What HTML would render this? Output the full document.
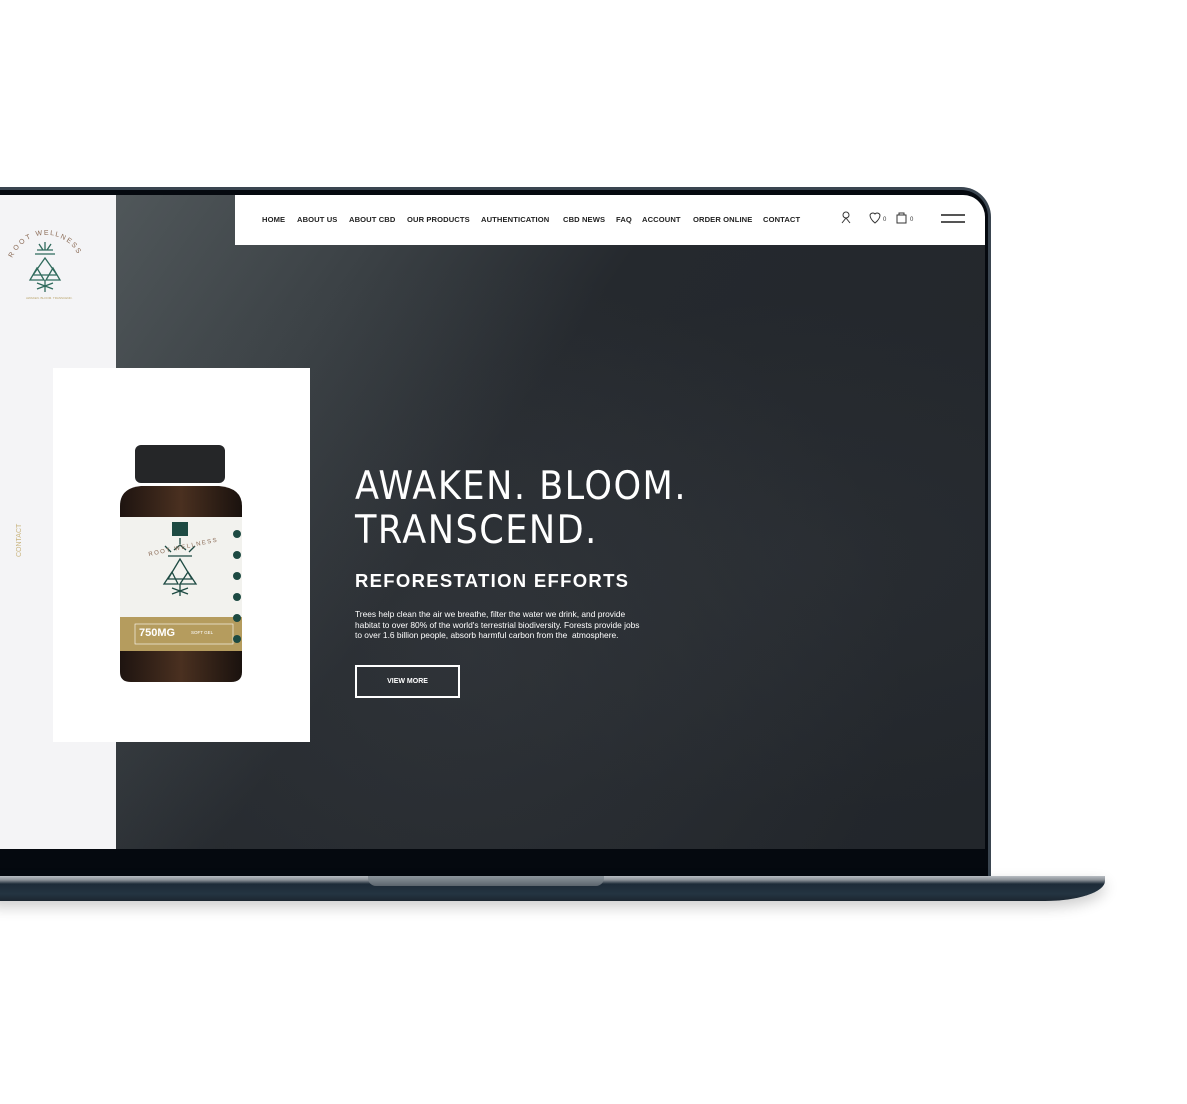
<!DOCTYPE html>
<html><head><style>
*{margin:0;padding:0;box-sizing:border-box}
body{width:1187px;height:1104px;background:#fff;position:relative;overflow:hidden;font-family:"Liberation Sans",sans-serif}
.lid{position:absolute;left:-20px;top:187px;width:1011px;height:690px;background:#3a4550;border-radius:0 30px 0 0}
.lidin{position:absolute;left:-20px;top:190px;width:1008px;height:686px;background:#05090f;border-radius:0 27px 0 0}
.screen{position:absolute;left:0;top:195px;width:985px;height:654px;overflow:hidden;border-radius:0 22px 0 0;background:#23272c}
.side{position:absolute;left:0;top:0;width:116px;height:654px;background:#f4f4f6}
.hero{position:absolute;left:116px;top:0;width:869px;height:654px;background:linear-gradient(125deg,#50575a 0%,#3b4145 22%,#25292e 42%,#22262b 100%)}
.mtn{position:absolute;left:116px;top:0;width:869px;height:654px;background:radial-gradient(ellipse at 40% 70%,rgba(90,95,100,.18),transparent 60%),radial-gradient(ellipse at 80% 55%,rgba(70,75,80,.15),transparent 50%)}
.nav{position:absolute;left:235px;top:0;width:750px;height:50px;background:#fff}
.nav span{position:absolute;top:20px;font-size:7.6px;font-weight:bold;color:#222;letter-spacing:.1px}
.card{position:absolute;left:53px;top:173px;width:257px;height:374px;background:#fff}
.base{position:absolute;left:-10px;top:876px;width:1115px;height:25px;background:linear-gradient(#b8bdc2 0,#8a9096 4px,#1d2b38 8px,#243441 18px,#1c2630 100%);border-radius:0 0 60px 0/0 0 20px 0;box-shadow:0 6px 14px rgba(0,0,0,.2)}
.notch{position:absolute;left:368px;top:876px;width:236px;height:10px;background:linear-gradient(#8e969d,#5c656d);border-radius:0 0 8px 8px}
</style></head><body>
<div class="lid"></div><div class="lidin"></div>
<div class="screen">
<div class="side">
<svg style="position:absolute;left:4px;top:35px" width="90" height="75" viewBox="0 0 90 75" font-family="Liberation Sans" font-size="7" fill="#8a6a55">
<text transform="translate(8,28) rotate(-60)">R</text>
<text transform="translate(12,21) rotate(-48)">O</text>
<text transform="translate(17,15) rotate(-36)">O</text>
<text transform="translate(23,10) rotate(-24)">T</text>
<text transform="translate(32,6) rotate(-10)">W</text>
<text transform="translate(40,5) rotate(-2)">E</text>
<text transform="translate(46,5) rotate(6)">L</text>
<text transform="translate(51,6) rotate(14)">L</text>
<text transform="translate(56,8) rotate(24)">N</text>
<text transform="translate(62,11) rotate(34)">E</text>
<text transform="translate(67,15) rotate(44)">S</text>
<text transform="translate(71,20) rotate(54)">S</text>
<g stroke="#2f6a5c" stroke-width="1.3" fill="none"><path d="M41 28 L29 45 L53 45 Z M33 38 L26 50 L40 50 Z M49 38 L42 50 L56 50 Z"/><path d="M41 50 L41 62 M33 53 L49 59 M49 53 L33 59"/><path d="M31 24 L51 24 M33 20 L49 20 M41 12 L41 20 M35 14 L39 20 M47 14 L43 20"/></g>
<text x="22" y="69" font-size="3" fill="#b9a36a">AWAKEN. BLOOM. TRANSCEND.</text>
</svg>
<div style="position:absolute;left:16px;top:362px;transform:rotate(-90deg);transform-origin:left top;font-size:7px;color:#c9b47e;white-space:nowrap">CONTACT</div>
<div style="position:absolute;left:86px;top:497px;transform:rotate(-90deg);transform-origin:left top;font-size:7px;color:#b79b56;white-space:nowrap;letter-spacing:.2px">BROAD SPECTRUM CBD 750MG</div>
</div>
<div class="hero"></div><div class="mtn"></div>
<div class="nav">
<span style="left:27px">HOME</span><span style="left:62px">ABOUT US</span><span style="left:114px">ABOUT CBD</span><span style="left:172px">OUR PRODUCTS</span><span style="left:246px">AUTHENTICATION</span><span style="left:328px">CBD NEWS</span><span style="left:381px">FAQ</span><span style="left:407px">ACCOUNT</span><span style="left:458px">ORDER ONLINE</span><span style="left:528px">CONTACT</span>
<svg style="position:absolute;left:605px;top:16px" width="80" height="14" viewBox="0 0 80 14" fill="none" stroke="#333" stroke-width="1"><circle cx="6" cy="4" r="3"/><path d="M2 12 L6 7 L10 12"/><path d="M30 4 A3 3 0 0 1 35 3 A3 3 0 0 1 40 4 Q40 8 35 12 Q30 8 30 4Z"/><rect x="57" y="4" width="9" height="8"/><path d="M59 4 V2 H64 V4"/><text x="43" y="10" font-size="6" fill="#333" stroke="none">0</text><text x="70" y="10" font-size="6" fill="#333" stroke="none">0</text></svg>
<div style="position:absolute;left:706px;top:19px;width:24px;height:1.5px;background:#555"></div>
<div style="position:absolute;left:706px;top:26px;width:24px;height:1.5px;background:#555"></div>
</div>
<div class="card">
<svg style="position:absolute;left:64px;top:76px" width="128" height="240" viewBox="0 0 128 240">
<defs><linearGradient id="jar" x1="0" x2="1"><stop offset="0" stop-color="#1e1410"/><stop offset=".5" stop-color="#4a3020"/><stop offset="1" stop-color="#1a120e"/></linearGradient></defs>
<path d="M3 62 Q3 44 24 42 L102 42 Q125 44 125 62 L125 228 Q125 238 114 238 L14 238 Q3 238 3 228 Z" fill="url(#jar)"/>
<rect x="18" y="1" width="90" height="38" rx="6" fill="#252628"/>
<rect x="3" y="73" width="122" height="100" fill="#f2f2ee"/>
<rect x="3" y="173" width="122" height="34" fill="#b59c5e"/>
<rect x="55" y="78" width="16" height="14" fill="#1d4a42"/>
<g stroke="#1d4a42" stroke-width="1.3" fill="none"><path d="M63 115 L51 135 L75 135Z M55 128 L47 140 L61 140Z M71 128 L63 140 L79 140Z M63 140 V152 M55 144 L71 150 M71 144 L55 150"/><path d="M51 112 H75 M57 106 L63 101 L69 106 M54 108 L48 102 M72 108 L78 102 M63 100 V94"/></g>
<text x="30" y="106" font-size="6" fill="#8a6a55" letter-spacing="1.5" transform="rotate(-12 60 100)">ROOT WELLNESS</text>
<text x="22" y="192" font-size="11" font-weight="bold" fill="#fff">750MG</text>
<rect x="18" y="180" width="98" height="20" fill="none" stroke="#fff" stroke-width=".6"/>
<text x="74" y="190" font-size="4.5" fill="#fff">SOFT GEL</text>
<g fill="#1d4a42"><circle cx="120" cy="90" r="4"/><circle cx="120" cy="111" r="4"/><circle cx="120" cy="132" r="4"/><circle cx="120" cy="153" r="4"/><circle cx="120" cy="174" r="4"/><circle cx="120" cy="195" r="4"/></g>
</svg>
</div>
<div style="position:absolute;left:355px;top:270px;color:#fff;font-size:39px;line-height:44px;letter-spacing:1.5px;font-family:'DejaVu Sans Condensed','Liberation Sans',sans-serif">AWAKEN. BLOOM.<br>TRANSCEND.</div>
<div style="position:absolute;left:355px;top:375px;color:#fff;font-size:18.5px;font-weight:bold;letter-spacing:1.3px">REFORESTATION EFFORTS</div>
<div style="position:absolute;left:355px;top:414px;color:#fff;font-size:8.4px;line-height:10.7px;width:290px">Trees help clean the air we breathe, filter the water we drink, and provide habitat to over 80% of the world's terrestrial biodiversity. Forests provide jobs to over 1.6 billion people, absorb harmful carbon from the &nbsp;atmosphere.</div>
<div style="position:absolute;left:355px;top:470px;width:105px;height:33px;border:2px solid #fff;color:#fff;font-size:7px;font-weight:bold;text-align:center;line-height:29px">VIEW MORE</div>
</div>
<div class="base"></div><div class="notch"></div>
</body></html>
